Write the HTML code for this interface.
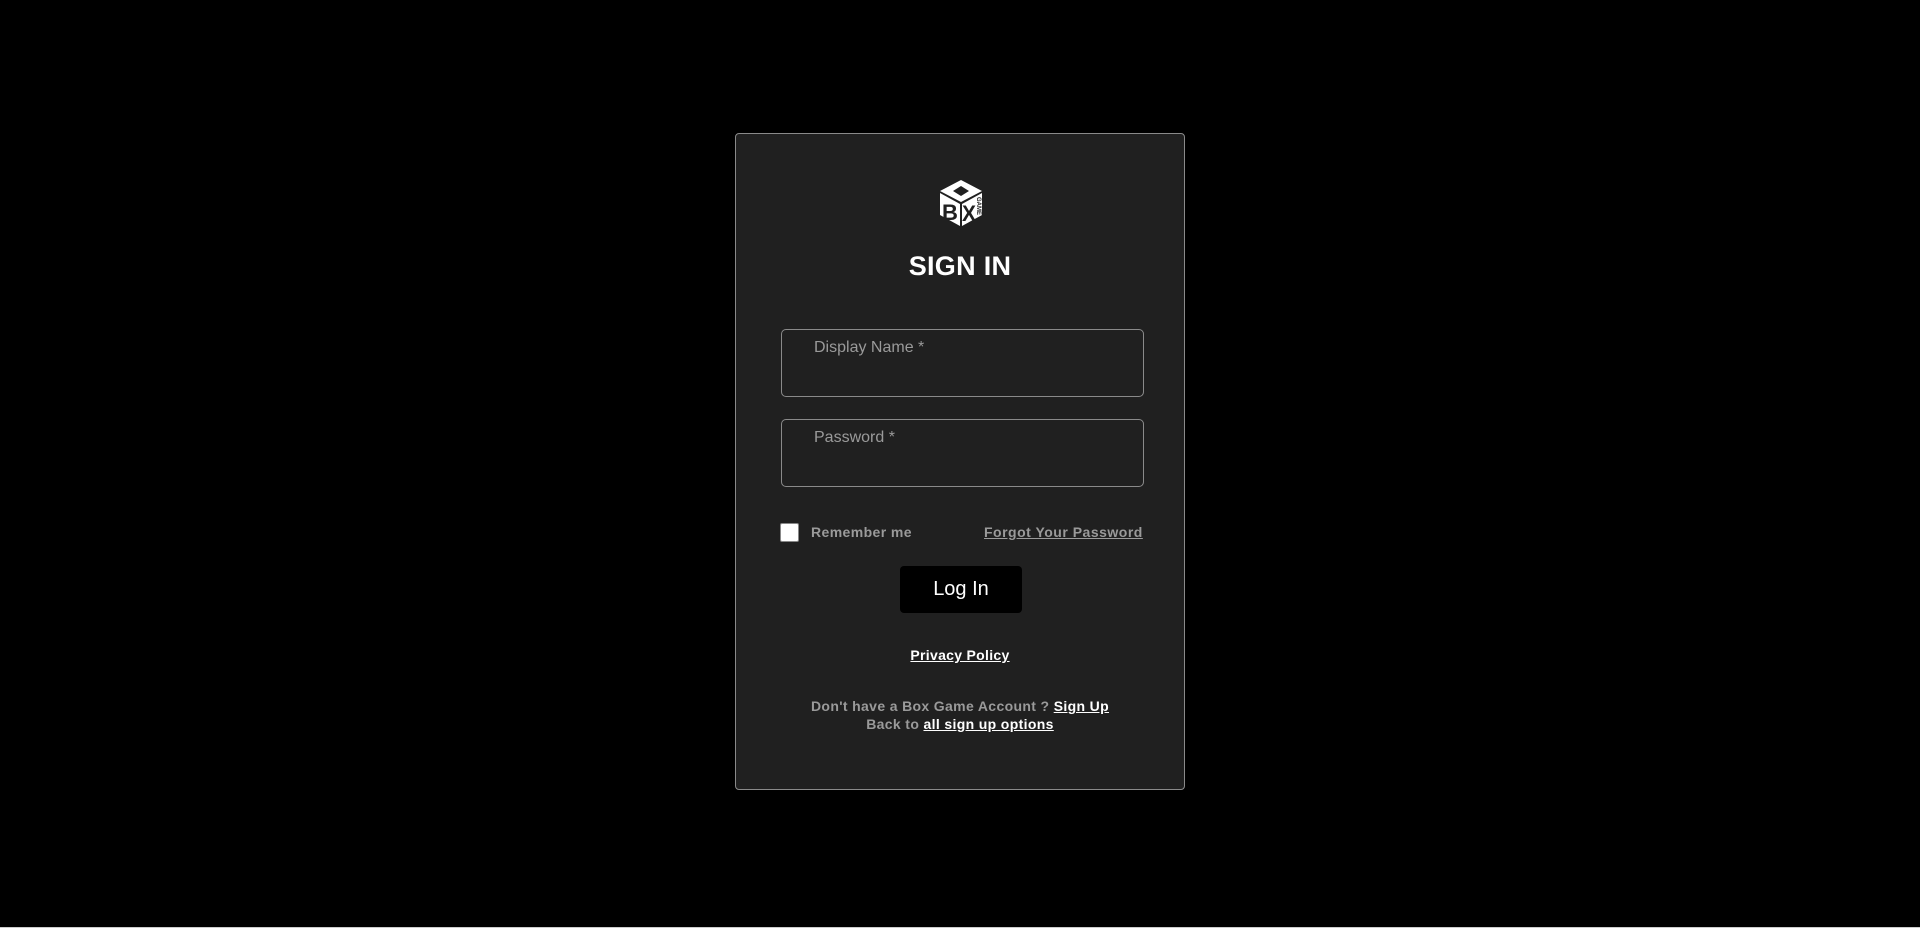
<!DOCTYPE html>
<html><head><meta charset="utf-8"><style>
html,body{margin:0;padding:0;background:#000;width:1920px;height:928px;overflow:hidden;font-family:"Liberation Sans",Arial,sans-serif;}
.bl{position:absolute;left:0;top:927px;width:1920px;height:1px;background:#ccc}
.card{position:absolute;left:735px;top:133px;width:448px;height:655px;background:#202020;border:1px solid #8a8a8a;border-radius:4px;}
.a{position:absolute}
.title{left:0;width:448px;top:116px;text-align:center;color:#fff;font-weight:bold;font-size:27px;line-height:32px;letter-spacing:0.3px}
.inp{left:45px;width:361px;height:66px;border:1px solid #8a8a8a;border-radius:5px;}
.lab{left:32px;top:9px;color:#9a9a9a;font-size:16px;line-height:18px}
.cb{left:44px;top:389px;width:17px;height:17px;background:#fff;border:1px solid #888;border-radius:2px}
.rm{left:75px;top:389px;color:#9a9a9a;font-weight:bold;font-size:14px;line-height:18px;letter-spacing:0.4px}
.fp{left:248px;top:389px;color:#9a9a9a;font-weight:bold;font-size:14px;line-height:18px;text-decoration:underline;letter-spacing:0.5px}
.btn{left:164px;top:432px;width:122px;height:47px;background:#000;border-radius:4px;color:#fff;font-size:20px;line-height:47px;text-align:center}
.pp{left:0;width:448px;top:512px;text-align:center;color:#fff;font-weight:bold;font-size:14px;line-height:18px;text-decoration:underline;letter-spacing:0.3px}
.ft{left:0;width:448px;top:563px;text-align:center;color:#9a9a9a;font-weight:bold;font-size:14px;line-height:18px;letter-spacing:0.35px}
.ft u{color:#fff}
</style></head><body>
<div class="card">
<svg class="a" style="left:202px;top:46px" width="46" height="46" viewBox="0 0 46 46">
<polygon points="23,0 44,11 23,22 2,11" fill="#fff"/>
<polygon points="23,6 31,11 23,16 15,11" fill="#202020"/>
<polygon points="2,13 22,24 22,46 2,35" fill="#fff"/>
<polygon points="24,24 44,13 44,35 24,46" fill="#fff"/>
<text x="4" y="40" font-family="Liberation Sans" font-weight="bold" font-size="22" fill="#202020">B</text>
<text x="24" y="41" font-family="Liberation Sans" font-weight="bold" font-size="22" fill="#202020" textLength="14" lengthAdjust="spacingAndGlyphs">X</text>
<text x="0" y="0" font-family="Liberation Sans" font-weight="bold" font-size="6" fill="#202020" transform="translate(39,17) rotate(90)">GAME</text>
</svg>
<div class="a title">SIGN IN</div>
<div class="a inp" style="top:195px"><div class="a lab">Display Name *</div></div>
<div class="a inp" style="top:285px"><div class="a lab">Password *</div></div>
<div class="a cb"></div>
<div class="a rm">Remember me</div>
<div class="a fp">Forgot Your Password</div>
<div class="a btn">Log In</div>
<div class="a pp">Privacy Policy</div>
<div class="a ft">Don't have a Box Game Account ? <u>Sign Up</u><br>Back to <u>all sign up options</u></div>
</div>
<div class="bl"></div>
</body></html>
